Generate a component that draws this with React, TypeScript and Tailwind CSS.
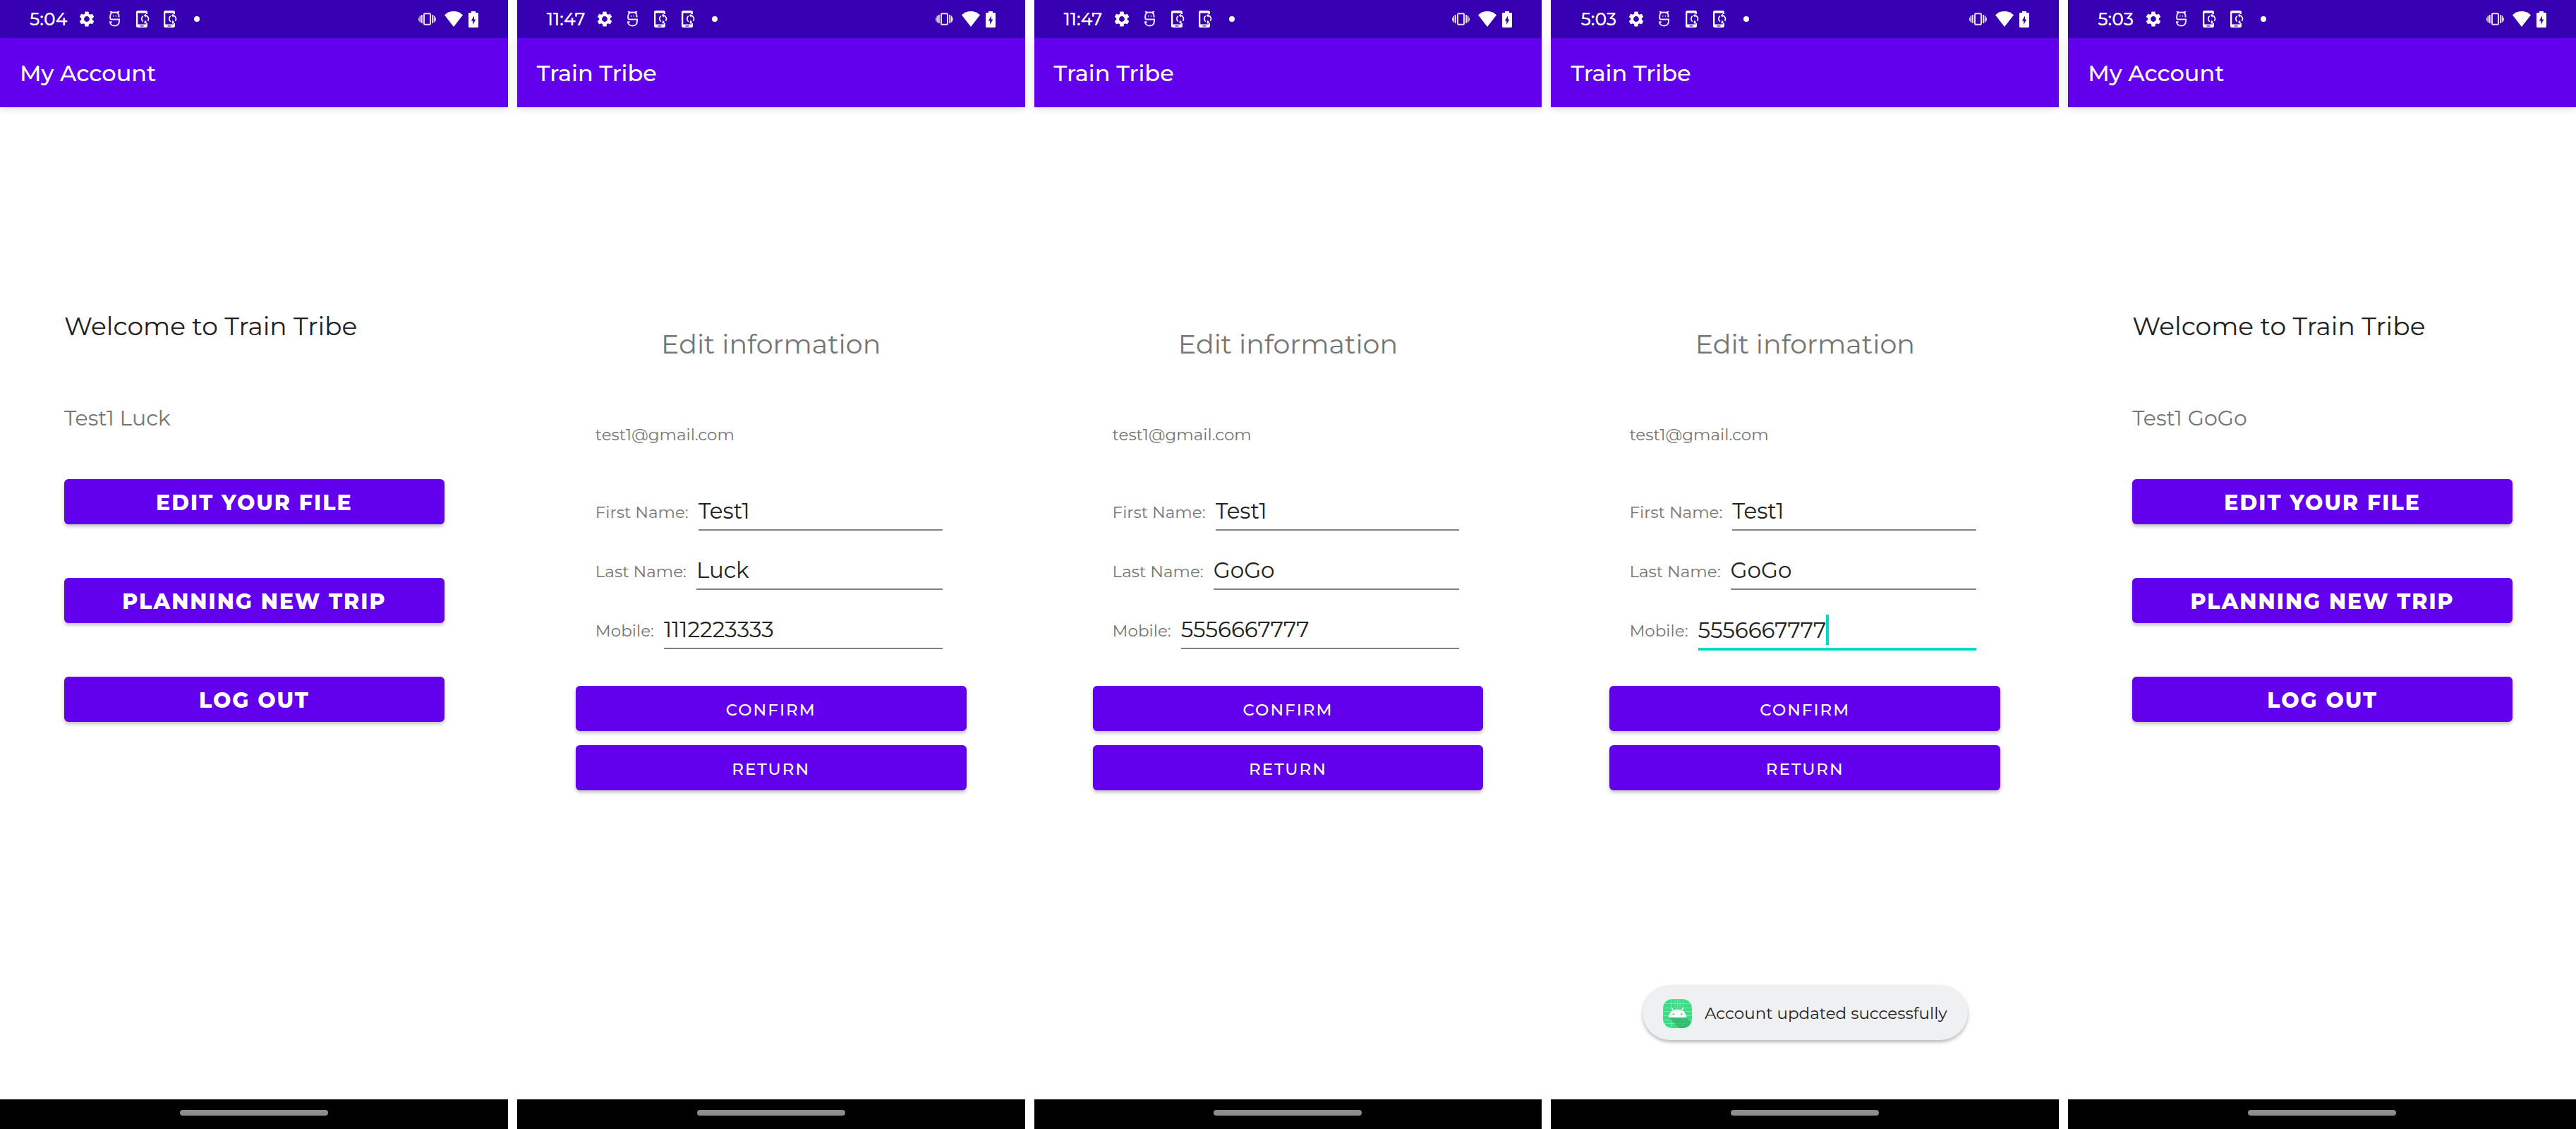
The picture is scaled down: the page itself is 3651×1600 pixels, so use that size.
import { useId, type ReactNode } from "react";
import { MdSettings } from "react-icons/md";

function MaskIcon() {
  return (
    <svg viewBox="0 0 17 22" className="h-[22px] w-[17px]" fill="none" stroke="#ece6f9" strokeWidth="2" aria-hidden="true">
      <path d="M14.500 8.500V6.500C14.500 4.500 14 3.400 13 2.800L14 .8L11.200 1.800C9.400 1.300 7.600 1.300 5.800 1.800L3 .8L4 2.800C2.600 3.800 2.200 5.200 2.200 7V9.200C2.200 10.600 2.800 11.400 4 11.400H15V14C15 18 12.500 20.600 8.500 20.600C4.800 20.600 2.200 18.400 2 15.200H4.600" />
      <circle cx="6.800" cy="6.800" r=".5" fill="#ece6f9" strokeWidth="1" />
      <circle cx="10.400" cy="6.800" r=".5" fill="#ece6f9" strokeWidth="1" />
    </svg>
  );
}

function PhoneSyncIcon() {
  return (
    <svg viewBox="0 0 19 24" className="h-6 w-[19px]" aria-hidden="true">
      <path
        fill="#fff"
        fillRule="evenodd"
        d="M2.500 0H13.500A2.500 2.500 0 0 1 16 2.500V5H13.800V3.400H2.300V19.500H13.800V18H16V21.500A2.500 2.500 0 0 1 13.500 24H2.500A2.500 2.500 0 0 1 0 21.500V2.500A2.500 2.500 0 0 1 2.500 0ZM5.500 21.200V22.400H10.500V21.200Z"
      />
      <path d="M9.800 15.600A5 5 0 0 1 9.800 7.600M13.600 6.900A5 5 0 0 1 16.400 14.800M13 16.400A5 5 0 0 1 11.500 16.300" fill="none" stroke="#fff" strokeWidth="1.700" />
      <path d="M13.800 4.200V9.800L10.800 7ZM12.200 13.400V19L15.200 16.200Z" fill="#fff" />
    </svg>
  );
}

function VibrateIcon() {
  return (
    <svg viewBox="0 0 25 18" className="h-[18px] w-[25px]" fill="none" stroke="#e6dff6" aria-hidden="true">
      <rect x="8" y="1.200" width="9" height="15.600" rx="1.200" strokeWidth="2" />
      <path d="M4.800 3V15M20.200 3V15" strokeWidth="2" />
      <path d="M2.400 4.600V13.400M22.600 4.600V13.400" strokeWidth="1.600" />
      <path d="M.8 7V11.400M24.200 7V11.400" strokeWidth="1.400" />
    </svg>
  );
}

function WifiIcon() {
  return (
    <svg viewBox="0 0 26 22" className="h-[22px] w-[26px]" fill="#fff" aria-hidden="true">
      <path d="M13 22L0 5.200C3.600 1.800 8.200 0 13 0S22.400 1.800 26 5.200Z" />
    </svg>
  );
}

function BatteryIcon() {
  return (
    <svg viewBox="0 0 14 23" className="h-[23px] w-3.5" aria-hidden="true">
      <path fill="#fff" fillRule="evenodd" d="M4 0H10V2H12.600A1.400 1.400 0 0 1 14 3.400V21.600A1.400 1.400 0 0 1 12.600 23H1.400A1.400 1.400 0 0 1 0 21.600V3.400A1.400 1.400 0 0 1 1.400 2H4ZM8 6.500L3.800 13.600H6.200V19L10.300 11.600H8Z" />
    </svg>
  );
}

function AndroidIcon() {
  const clip = useId();
  return (
    <svg viewBox="0 0 41 41" className="size-[41px] shrink-0" aria-hidden="true">
      <clipPath id={clip}>
        <rect width="41" height="41" rx="13" />
      </clipPath>
      <g clipPath={`url(#${clip})`}>
        <rect width="41" height="41" fill="#3ddc84" />
        <path d="M12.500 0V41M17 0V11M20.500 0V11M24 0V11M28.500 0V41M0 6.500H41M0 12.500H41M0 17.500H41M0 23.500H41M0 29.500H41M0 34.500H41" stroke="#fff" strokeOpacity=".4" strokeWidth=".8" />
        <path d="M8 26L23 41H41V34L33 26Z" fill="#2fb46a" fillOpacity=".75" />
      </g>
      <path d="M12.500 12.500L15 17M28.500 12.500L26 17" stroke="#fff" strokeWidth="1.400" strokeLinecap="round" />
      <path d="M7.500 26C8 19.500 13.500 14.500 20.500 14.500S33 19.500 33.500 26Z" fill="#fff" />
      <circle cx="14.800" cy="21.200" r="1.200" fill="#3ddc84" />
      <circle cx="26.200" cy="21.200" r="1.200" fill="#3ddc84" />
    </svg>
  );
}

type PhoneProps = { time: string; title: string; toast?: string; children: ReactNode };

function Phone({ time, title, toast, children }: PhoneProps) {
  return (
    <section className="flex min-h-screen min-w-0 flex-col bg-white">
      <div className="flex h-[54px] items-center bg-[#3700b3] px-[42px] text-white">
        <span className="text-[25px] leading-8 font-medium">{time}</span>
        <div className="ml-[15px] flex items-center">
          <MdSettings className="size-[26px]" />
          <span className="ml-[18px]">
            <MaskIcon />
          </span>
          <span className="ml-[22px]">
            <PhoneSyncIcon />
          </span>
          <span className="ml-5">
            <PhoneSyncIcon />
          </span>
          <span className="ml-6 size-2 rounded-full bg-white" />
        </div>
        <div className="ml-auto flex items-center">
          <VibrateIcon />
          <span className="ml-3">
            <WifiIcon />
          </span>
          <span className="ml-2">
            <BatteryIcon />
          </span>
        </div>
      </div>
      <header className="flex h-[98px] items-center bg-[#6200ee] px-7 pt-0.5 shadow-[0_3px_10px_rgba(0,0,0,0.12)]">
        <h1 className="text-[32px] leading-10 font-medium text-white">{title}</h1>
      </header>
      <main className="relative flex-1">
        {children}
        {toast && (
          <div role="status" className="absolute inset-x-0 bottom-[84px] flex justify-center">
            <div className="flex h-[78px] items-center gap-[18px] rounded-full bg-[#eff0f2] px-[29px] pt-0.5 shadow-[0_3px_5px_rgba(0,0,0,0.28)]">
              <AndroidIcon />
              <p className="text-[23px] leading-8 text-[#202124]">{toast}</p>
            </div>
          </div>
        )}
      </main>
      <footer className="flex h-[42px] items-center justify-center bg-black">
        <span className="mb-1 h-2 w-[210px] rounded-full bg-[#8d8d8d]" />
      </footer>
    </section>
  );
}

const buttonClass =
  "block h-16 w-full rounded-md bg-[#6200ee] pt-1 text-center text-white shadow-[0_3px_5px_rgba(0,0,0,0.25)]";

function Account({ time, name }: { time: string; name: string }) {
  return (
    <Phone time={time} title="My Account">
      <div className="pt-[286px] pr-[90px] pl-[91px]">
        <h2 className="text-[36px] leading-12 text-[#212121]">Welcome to Train Tribe</h2>
        <p className="mt-[87px] text-[30px] leading-10 text-[#757575]">{name}</p>
        <div className="mt-[66px] flex flex-col gap-[76px]">
          {["EDIT YOUR FILE", "PLANNING NEW TRIP", "LOG OUT"].map((label) => (
            <button key={label} type="button" className={`${buttonClass} text-[30px] leading-10 font-extrabold tracking-[2px]`}>
              {label}
            </button>
          ))}
        </div>
      </div>
    </Phone>
  );
}

function Field({ label, value, focused = false }: { label: string; value: string; focused?: boolean }) {
  const id = useId();
  return (
    <div className="flex h-[84px] items-end gap-3.5 pb-8">
      <label htmlFor={id} className="shrink-0 pb-2.5 text-[23px] leading-8 text-[#757575]">
        {label}
      </label>
      {focused ? (
        <div className="-mb-0.5 flex min-w-0 flex-1 items-center border-b-4 border-[#03dac5] pb-1">
          <input id={id} type="tel" defaultValue={value} className="min-w-0 field-sizing-content text-[31px] leading-10 text-[#212121] outline-none" />
          <span className="h-[43px] w-1 bg-[#03dac5]" />
        </div>
      ) : (
        <input
          id={id}
          type="text"
          defaultValue={value}
          className="min-w-0 flex-1 border-b-2 border-[#808080] pb-1.5 text-[31px] leading-10 text-[#212121] outline-none"
        />
      )}
    </div>
  );
}

type EditProps = { time: string; last: string; mobile: string; focused?: boolean; toast?: string };

function EditInfo({ time, last, mobile, focused, toast }: EditProps) {
  return (
    <Phone time={time} title="Train Tribe" toast={toast}>
      <form className="px-[83px] pt-[308px]">
        <h2 className="text-center text-[38px] leading-14 text-[#757575]">Edit information</h2>
        <div className="pr-[34px] pl-7">
          <p className="mt-[84px] text-[23px] leading-8 text-[#757575]">test1@gmail.com</p>
          <div className="mt-[68px]">
            <Field label="First Name:" value="Test1" />
            <Field label="Last Name:" value={last} />
            <Field label="Mobile:" value={mobile} focused={focused} />
          </div>
        </div>
        <div className="mt-5 flex flex-col gap-5">
          {["CONFIRM", "RETURN"].map((label) => (
            <button key={label} type="button" className={`${buttonClass} text-[23px] leading-8 font-medium tracking-[2px]`}>
              {label}
            </button>
          ))}
        </div>
      </form>
    </Phone>
  );
}

export default function App() {
  return (
    <div className="grid min-h-screen grid-cols-5 gap-[13px] bg-white font-[Montserrat,Inter,sans-serif]">
      <Account time="5:04" name="Test1 Luck" />
      <EditInfo time="11:47" last="Luck" mobile="1112223333" />
      <EditInfo time="11:47" last="GoGo" mobile="5556667777" />
      <EditInfo time="5:03" last="GoGo" mobile="5556667777" focused toast="Account updated successfully" />
      <Account time="5:03" name="Test1 GoGo" />
    </div>
  );
}
